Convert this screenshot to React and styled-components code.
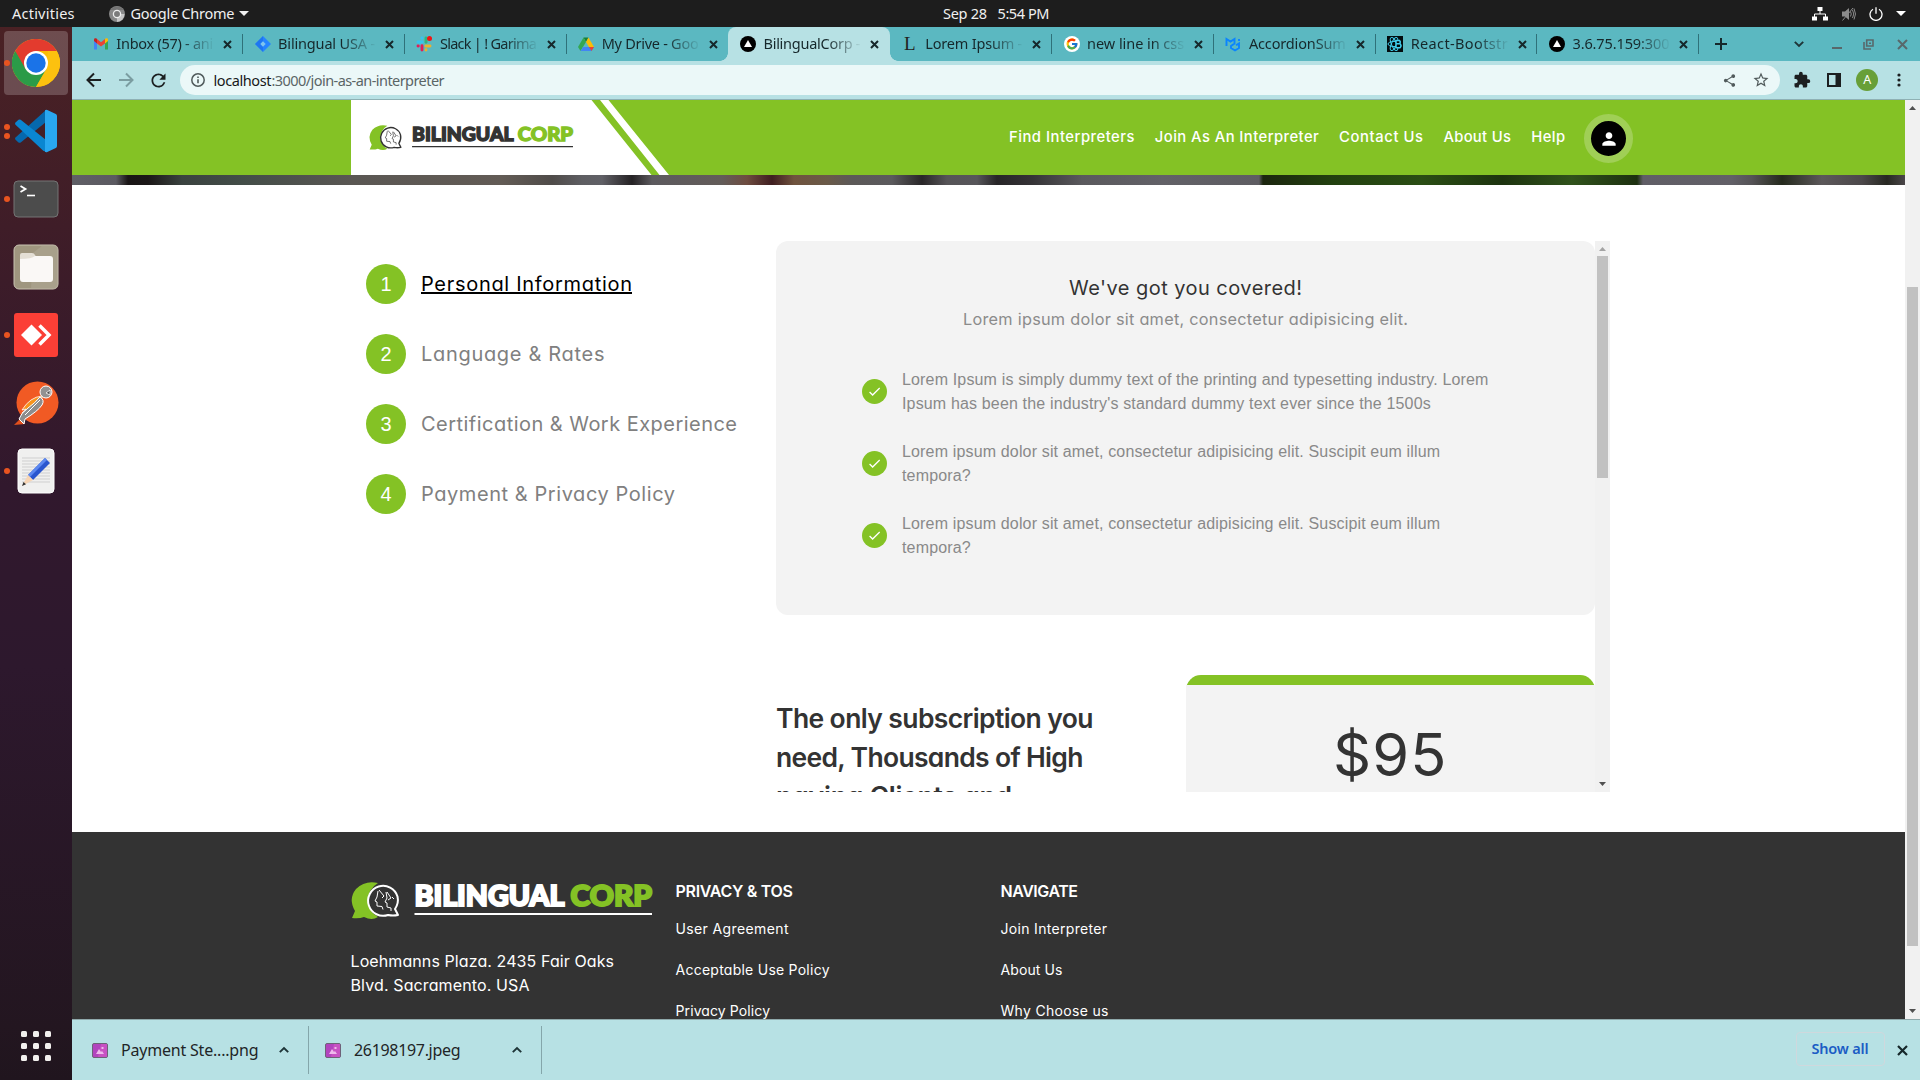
import React, { useLayoutEffect, useRef, useState } from "react";
import styled, { createGlobalStyle, css } from "styled-components";
import { FcGoogle } from "react-icons/fc";
import { MdExtension, MdShare, MdStarBorder, MdRefresh, MdPerson, MdCheck } from "react-icons/md";

const GREEN = "#84c225";
const UI = `"Noto Sans", "Open Sans", sans-serif`;
const BRAND = `Inter, "Open Sans", sans-serif`;

const Global = createGlobalStyle`
  * { box-sizing: border-box; }
  body { margin: 0; overflow: hidden; font-family: ${BRAND}; font-feature-settings: "cv11"; }
  svg { display: block; flex: none; }
  p, h1, h2, ul { margin: 0; padding: 0; font-weight: inherit; }
`;

/* Text whose tracking is tuned so that it spans a given width */
const FitBox = styled.span`
  display: block;
  white-space: pre;
  flex: none;
`;
function Fit({ w, children }) {
  const ref = useRef(null);
  const [ls, setLs] = useState(0);
  useLayoutEffect(() => {
    const el = ref.current;
    el.style.letterSpacing = "0px";
    const natural = el.getBoundingClientRect().width;
    setLs((w - natural) / Math.max(1, children.length - 1));
    el.style.letterSpacing = "";
  }, [w, children]);
  return (
    <FitBox style={{ width: w }}>
      <span key={ls} ref={ref} style={{ letterSpacing: ls }}>{children}</span>
    </FitBox>
  );
}

/* ---------- desktop shell ---------- */
const Screen = styled.div`
  width: 1920px;
  height: 1080px;
  display: flex;
  flex-direction: column;
  overflow: hidden;
  background: #fff;
`;
const TopBar = styled.header`
  height: 27px;
  flex: none;
  background: #1d1d1d;
  color: #f0f0f0;
  font: 14.5px/27px ${UI};
  display: grid;
  grid-template-columns: 943px 1fr auto;
  padding-right: 14px;
`;
const TopGroup = styled.div`
  display: flex;
  align-items: center;
  padding-left: ${(p) => p.$pad || 0}px;
  gap: ${(p) => p.$gap || 0}px;
`;
const ChromeMono = styled.div`
  margin: 0 6px 0 34px;
`;
const CaretGap = styled.div`
  margin-left: 4px;
`;
const Body = styled.div`
  flex: 1;
  min-height: 0;
  display: flex;
`;
const Dock = styled.nav`
  width: 72px;
  flex: none;
  padding: 4px 4px 15px;
  display: flex;
  flex-direction: column;
  gap: 4px;
  background: linear-gradient(180deg, #4a2124 0, #3f1d28 200px, #31182d 460px, #2d182d 640px, #231620 1000px, #20151e 100%);
`;
const Tile = styled.div`
  width: 64px;
  height: 64px;
  border-radius: 4px;
  display: flex;
  align-items: center;
  justify-content: center;
  position: relative;
  background: ${(p) => (p.$active ? "rgba(255,255,255,.2)" : "transparent")};
`;
const Marks = styled.div`
  position: absolute;
  left: 0;
  top: 0;
  height: 64px;
  display: flex;
  flex-direction: column;
  justify-content: center;
  gap: 3px;
`;
const Mark = styled.i`
  width: 6px;
  height: 6px;
  border-radius: 50%;
  background: #e95420;
`;
const AppGrid = styled.div`
  margin: auto 0 0 17px;
  display: grid;
  grid-template-columns: repeat(3, 6px);
  gap: 6px;
  padding-bottom: 4px;
`;
const AppDot = styled.i`
  height: 6px;
  border-radius: 1.5px;
  background: #f2f0ee;
`;

/* ---------- browser ---------- */
const Browser = styled.div`
  flex: 1;
  min-width: 0;
  display: flex;
  flex-direction: column;
`;
const TabStrip = styled.div`
  height: 34px;
  flex: none;
  background: #5bb8c1;
  display: flex;
  padding-left: 8.8px;
`;
const TabBox = styled.div`
  width: 161.8px;
  flex: none;
  height: 34px;
  position: relative;
  display: flex;
  align-items: center;
  padding-left: 12px;
  color: #16282b;
  font: 14.5px/32px ${UI};
  ${(p) =>
    p.$active
      ? css`
          background: #b7e1e4;
          border-radius: 8px 8px 0 0;
          &::before, &::after {
            content: "";
            position: absolute;
            bottom: 0;
            width: 8px;
            height: 8px;
            background: radial-gradient(circle at 0 0, transparent 7.5px, #b7e1e4 8px);
          }
          &::before { left: -8px; }
          &::after { right: -8px; transform: scaleX(-1); }
        `
      : ""}
`;
const TabTitle = styled.div`
  width: 97px;
  height: 34px;
  margin: 0 10px 0 7.5px;
  overflow: hidden;
  mask-image: linear-gradient(90deg, #000 66%, transparent 102%);
`;
const TabDivider = styled.i`
  position: absolute;
  right: -0.5px;
  top: 7px;
  width: 1px;
  height: 20px;
  background: #2f7179;
`;
const Favicon = styled.div`
  width: 16px;
  height: 16px;
  flex: none;
  display: flex;
  align-items: center;
  justify-content: center;
  font: 19px/16px "Liberation Serif", serif;
  color: #222;
`;
const WindowButtons = styled.div`
  flex: 1;
  display: flex;
  align-items: center;
  padding: 0 12.5px 0 15.5px;
`;
const Spacer = styled.div`
  flex: ${(p) => (p.$w ? `0 0 ${p.$w}px` : 1)};
`;
const Toolbar = styled.div`
  height: 39px;
  flex: none;
  background: #b7e1e4;
  border-bottom: 1px solid #8fb1b4;
  display: flex;
  align-items: center;
  padding: 0 16px 0 14px;
`;
const Omnibox = styled.div`
  width: 1600px;
  flex: none;
  height: 30px;
  margin: 0 13px 0 11.5px;
  border-radius: 15px;
  background: #ebf8f8;
  display: flex;
  align-items: center;
  padding: 0 10px 0 11px;
  font: 14.5px/29px ${UI};
  color: #5a6566;
`;
const Host = styled.b`
  font-weight: 400;
  color: #17191a;
  margin-left: 8.5px;
`;
const Profile = styled.div`
  width: 22px;
  height: 22px;
  border-radius: 50%;
  background: #689f38;
  color: #fff;
  text-align: center;
  font: 12.5px/22px ${UI};
`;
const Viewport = styled.div`
  flex: 1;
  min-height: 0;
  display: flex;
`;
const Page = styled.main`
  flex: 1;
  min-width: 0;
  height: 919px;
  overflow: hidden;
  display: flex;
  flex-direction: column;
  background: #fff;
`;
const Track = styled.div`
  width: 15px;
  flex: none;
  background: #f1f1f1;
  display: flex;
  flex-direction: column;
  align-items: center;
  justify-content: space-between;
  padding: 6px 0;
`;
const Thumb = styled.div`
  width: 11px;
  height: ${(p) => p.$h}px;
  margin-top: ${(p) => p.$gap}px;
  margin-bottom: auto;
  background: #c1c1c1;
`;

/* ---------- site ---------- */
const SiteHeader = styled.div`
  height: 75px;
  flex: none;
  background: ${GREEN};
  display: flex;
  padding-left: 279px;
`;
const Nav = styled.nav`
  display: flex;
  align-items: center;
  margin-left: 339px;
  color: #fff;
  font: 500 14.8px/72px ${BRAND};
  height: 73px;
  gap: 20.3px;
`;
const Account = styled.div`
  width: 49px;
  height: 49px;
  margin: 4px 0 0 -1px;
  border: 7px solid #a0cf56;
  border-radius: 50%;
  background: #000;
  color: #fff;
  display: flex;
  align-items: center;
  justify-content: center;
`;
const Banner = styled.div`
  height: 10px;
  flex: none;
  background: linear-gradient(90deg, #605f66 0, #5b5a61 44px, #191515 56px, #1b1717 76px, #3a423f 110px, #434d48 170px, #5a5753 280px, #625b55 430px, #4f4b49 480px, #5e5e62 510px, #606066 530px, #252224 560px, #5c5a5e 580px, #635c59 650px, #6e4c40 675px, #3f1e20 700px, #70533e 722px, #6a5a48 755px, #5c5958 780px, #5b5a5d 820px, #292628 850px, #565457 875px, #57565a 905px, #272527 925px, #353336 960px, #5a595d 1010px, #626167 1090px, #5e5d62 1187px, #1c260f 1191px, #22400f 1260px, #2a4d14 1350px, #1d330f 1430px, #30521b 1500px, #1d3010 1565px, #605e66 1571px, #626067 1660px, #555356 1680px, #252a1d 1710px, #5c585a 1750px, #4c484a 1790px, #272822 1815px, #4a4648 1833px);
`;
const Content = styled.section`
  height: 647px;
  flex: none;
  display: grid;
  grid-template-columns: 410px 834px;
  padding: 56px 0 40px 294px;
`;
const Steps = styled.ul`
  list-style: none;
  padding-top: 23px;
  display: flex;
  flex-direction: column;
  gap: 30px;
`;
const Step = styled.li`
  height: 40px;
  display: flex;
  align-items: center;
  gap: 15px;
  font-size: 20px;
  line-height: 40px;
  color: ${(p) => (p.$active ? "#000" : "#808080")};
`;
const StepNo = styled.div`
  width: 40px;
  height: 40px;
  border-radius: 50%;
  background: ${GREEN};
  color: #fff;
  text-align: center;
  font: 20px/40px "Liberation Sans", Arial, sans-serif;
`;
const StepLabel = styled.div`
  height: 30px;
  line-height: 30px;
  background: ${(p) => (p.$active ? "linear-gradient(#000, #000) 0 23px / 100% 2px no-repeat" : "none")};
`;
const ScrollPanel = styled.div`
  height: 551px;
  display: flex;
  overflow: hidden;
`;
const PanelBody = styled.div`
  width: 819px;
  height: 551px;
  overflow: hidden;
`;
const Covered = styled.div`
  height: 374px;
  border-radius: 12px;
  background: #f3f3f3;
  display: flex;
  flex-direction: column;
  align-items: center;
  padding-top: 32px;
`;
const CoveredTitle = styled.h2`
  font-size: 20px;
  line-height: 30px;
  color: #333;
`;
const CoveredSub = styled.p`
  font-size: 16.3px;
  line-height: 24px;
  margin: 4px 0 37px;
  color: #8b8b8b;
`;
const Perks = styled.ul`
  list-style: none;
  width: 647px;
  display: grid;
  gap: 24px;
`;
const Perk = styled.li`
  display: flex;
  align-items: center;
  gap: 15px;
  font: 16px/24px "Liberation Sans", Arial, sans-serif;
  letter-spacing: 0.155px;
  color: #898989;
  white-space: pre-line;
`;
const Tick = styled.div`
  width: 25px;
  height: 25px;
  margin-bottom: 2px;
  border-radius: 50%;
  background: ${GREEN};
  color: #fff;
  display: flex;
  align-items: center;
  justify-content: center;
`;
const Offer = styled.div`
  display: grid;
  grid-template-columns: 410px 409px;
  padding-top: 60px;
`;
const Pitch = styled.h2`
  padding: 24px 0 0;
  font-size: 26.5px;
  font-weight: 600;
  line-height: 39px;
  color: #333;
`;
const PriceCap = styled.div`
  height: 10px;
  overflow: hidden;
  &::before {
    content: "";
    display: block;
    height: 30px;
    border-radius: 15px;
    background: ${GREEN};
  }
`;
const Price = styled.div`
  height: 200px;
  background: #f3f3f3;
  color: #333;
  font-size: 59.5px;
  line-height: 91px;
  padding: 24px 0 0 147px;
`;
const Footer = styled.footer`
  height: 187px;
  flex: none;
  background: #333;
  color: #fff;
  display: grid;
  grid-template-columns: 324.5px 325px 1fr;
  padding: 46px 0 0 279px;
  overflow: hidden;
`;
const FootLogo = styled.div`
  padding-top: 4px;
`;
const Address = styled.p`
  padding-top: 28.5px;
  margin-left: -0.5px;
  font-size: 16px;
  line-height: 24px;
`;
const FootHead = styled.div`
  font-size: 16px;
  font-weight: 600;
  line-height: 24px;
  padding-top: 1px;
`;
const FootLink = styled.div`
  font-size: 14px;
  line-height: 21px;
  margin: ${(p) => (p.$first ? 15 : 20)}px 0 0;
`;

/* ---------- downloads ---------- */
const Downloads = styled.div`
  height: 61px;
  flex: none;
  border-top: 1px solid #8fa9ab;
  background: #b7e1e4;
  display: flex;
  align-items: center;
  padding: 0 12.5px 0 0;
`;
const DownloadItem = styled.div`
  width: ${(p) => p.$w}px;
  height: 48px;
  padding-left: ${(p) => p.$pad}px;
  border-right: 1px solid #84a6aa;
  display: flex;
  align-items: center;
  font: 16px/48px ${UI};
  color: #1f2527;
`;
const FileName = styled.div`
  width: 157px;
  margin-left: 13px;
`;
const ShowAll = styled.div`
  width: 89px;
  height: 34px;
  margin: 0 12px 2px auto;
  border: 1px solid #cfd8dd;
  border-radius: 4px;
  display: flex;
  justify-content: center;
  font: 600 14.5px/31px ${UI};
  color: #1b5cc4;
`;

/* ---------- icons ---------- */
const Svg = ({ s = 16, w, h, box, children, ...r }) => (
  <svg width={w || s} height={h || s} viewBox={box || `0 0 ${w || s} ${h || s}`} fill="none" {...r}>{children}</svg>
);
const Cross = ({ s = 9, c = "#16282b", t = 2 }) => (
  <Svg s={s}><path d={`M1 1 ${s - 1} ${s - 1}M${s - 1} 1 1 ${s - 1}`} stroke={c} strokeWidth={t} /></Svg>
);
const Caret = ({ up, c = "#505050", w = 7, h = 4 }) => (
  <Svg w={w} h={h}><path d={up ? `M0 ${h}L${w / 2} 0 ${w} ${h}z` : `M0 0H${w}L${w / 2} ${h}z`} fill={c} /></Svg>
);
const Chevron = ({ up }) => (
  <Svg w={12} h={8}><path d={up ? "M1.8 6.2 6 2l4.200 4.200" : "M1.800 1.800 6 6l4.200-4.200"} stroke="#1e3437" strokeWidth="1.9" /></Svg>
);
const Gmail = () => (
  <Svg box="0 0 16 16">
    <path d="M1 4.500v9h3V7z" fill="#4285f4" /><path d="M12 7v6.500h3v-9z" fill="#34a853" />
    <path d="M1 5V3.500C1 2.300 2.500 1.700 3.500 2.500L4 3v4.500L1 5z" fill="#c5221f" />
    <path d="M12 3l.5-.5C13.500 1.700 15 2.300 15 3.500V5l-3 2.500z" fill="#fbbc04" />
    <path d="M4 3l4 3.200L12 3v4.400L8 10.500 4 7.400z" fill="#ea4335" />
  </Svg>
);
const Jira = () => (
  <Svg box="0 0 16 16"><path d="M8 0l8 8-8 8-8-8z" fill="#2684ff" /><path d="M8 0v5L5.200 7.900 8 10.700V16L0 8z" fill="#1668e3" opacity=".5" /><path d="M8 5.300 10.700 8 8 10.700 5.300 8z" fill="#7fc4ee" /></Svg>
);
const Slack = () => (
  <Svg box="0 0 16 16" strokeWidth="2.900" strokeLinecap="round">
    <path d="M6 2v.3M2 6h4.200" stroke="#36c5f0" /><path d="M10 2v4.200" stroke="#2eb67d" />
    <path d="M14 10H9.800M10 14v-.3" stroke="#ecb22e" /><path d="M6 14V9.800M2 10h.3" stroke="#e01e5a" />
    <circle cx="13.500" cy="2.500" r="2.500" fill="#f21515" />
  </Svg>
);
const Drive = () => (
  <Svg box="0 0 16 16">
    <path d="M5.500 1.500h5L8 6z" fill="#188038" /><path d="M5.500 1.500 0 11l2.500 4L8 6z" fill="#34a853" />
    <path d="M10.500 1.500 16 11h-5L8 6z" fill="#fbbc04" /><path d="M5 11h11l-2.500 4h-11z" fill="#4285f4" /><path d="M11 11h5l-2.500 4z" fill="#ea4335" />
  </Svg>
);
const Vercel = () => (
  <Svg box="0 0 16 16"><circle cx="8" cy="8" r="8" fill="#000" /><path d="M8 4l4 7H4z" fill="#fff" /></Svg>
);
const Mui = () => (
  <Svg box="0 0 16 16" stroke="#0a84ff" strokeWidth="1.900"><path d="M1.500 10V3l4 2.600L9.500 3v4.500L6 10v2l4 2.500 4-2.500V7.500l-3 1.800M14 3v2" /></Svg>
);
const ReactBoot = () => (
  <Svg box="0 0 16 16"><path fill="#020b0e" d="M0 0h16v16H0z" />
    <g stroke="#41cfee" strokeWidth="1"><ellipse cx="7" cy="8" rx="6" ry="2.600" /><ellipse cx="7" cy="8" rx="2.500" ry="7" transform="rotate(-24 7 8)" /><ellipse cx="7" cy="8" rx="2.500" ry="7" transform="rotate(24 7 8)" /><path d="M9 4.500h3.500q1.500 1.600 0 3.300H9zM9 7.800h4q2 2 0 4H9z" strokeWidth="1.500" fill="#020b0e" /></g>
  </Svg>
);
const ChromeLogo = ({ s = 48 }) => (
  <Svg s={s} box="0 0 48 48">
    <circle cx="24" cy="24" r="24" fill="#fbbc05" />
    <path d="M24 24 3.200 12A24 24 0 0 0 24 48l10.400-18z" fill="#2b9b48" />
    <path d="M3.200 12A24 24 0 0 1 44.800 12H24L13.600 30z" fill="#e33b2e" />
    <path d="M44.800 12A24 24 0 0 1 24 48l10.400-18L36 12z" fill="#fcc10f" />
    <circle cx="24" cy="24" r="12" fill="#fff" /><circle cx="24" cy="24" r="9.700" fill="#1a73e8" />
  </Svg>
);
const MonoChrome = () => (
  <Svg s={16}><circle cx="8" cy="8" r="8" fill="#888" /><path d="M8 8h7.500A8 8 0 0 1 8 16z" fill="#c4c4c4" /><path d="M1.500 4A8 8 0 0 1 14.800 4z" fill="#747474" /><circle cx="8" cy="8" r="3.600" fill="#7b7b7b" stroke="#eee" strokeWidth="1.300" /></Svg>
);
const VSCode = () => (
  <Svg s={44} box="0 0 44 44">
    <path d="M32 1 1.500 28.500q-1 1 0 2.200l3 2.700q1 .8 2.200 0L32 13z" fill="#0668ad" />
    <path d="M1.500 13.500q-1 1.200 0 2.200L29 41.500l3 1.500V31L6.700 10.800q-1.200-.8-2.200 0z" fill="#0a86d1" />
    <path d="M31 1.200Q32 .3 33.300 1l8.500 4q1.200.7 1.200 2v30q0 1.400-1.200 2l-8.500 4q-1.300.6-2.300-.2z" fill="#29a7f0" />
  </Svg>
);
const Terminal = () => (
  <Svg w={46} h={38}><rect x="1" y="1" width="44" height="36" rx="4" fill="#4c4c4c" stroke="#747474" /><path d="M7.500 6l5 3-5 3" stroke="#fff" strokeWidth="1.800" /><path d="M14 15.500h8" stroke="#fff" strokeWidth="1.600" /></Svg>
);
const Files = () => (
  <Svg s={46}><rect x="1" y="1" width="44" height="44" rx="5" fill="#9f967f" stroke="#c9c3b2" /><path d="M20 9 30 1h11q4 0 4 4v36q0 4-4 4H18z" fill="#b1aa97" opacity=".5" /><path d="M7 18v-7q0-2 2-2h10q2 0 3 2l2 3v5z" fill="#e4dfd5" /><path d="M7 15q12 0 15-3h15q3 0 3 3v20q0 3-3 3H10q-3 0-3-3z" fill="#faf8f6" /></Svg>
);
const AnyDesk = () => (
  <Svg s={44}><rect width="44" height="44" rx="3" fill="#fb3f36" /><path d="M17.500 11.500 28 22 17.500 32.500 7 22z" fill="#fff" /><path d="M25.500 12.500 35 22l-9.500 9.500" stroke="#fff" strokeWidth="3.500" /></Svg>
);
const Postman = () => (
  <Svg w={46} h={46}>
    <circle cx="24.500" cy="22.500" r="21" fill="#f15a24" /><path d="M1 45 9 37l3 7z" fill="#e2501d" />
    <path d="M29 16Q17 17 9 30l4-1-4 4 16-9 4-6z" fill="#f7941d" stroke="#fff" strokeWidth=".8" />
    <path d="M27 17q5 3 2 8-4 6-17 14l-1 5-5-5q2-6 9-11 7-5 12-11z" fill="#8d8d8d" stroke="#fff" strokeWidth="1" />
    <path d="M12 35 27 20" stroke="#fff" strokeWidth="1" />
    <circle cx="33" cy="12" r="6" fill="#929292" stroke="#fff" strokeWidth="1" /><path d="M33 13l4-3v5z" fill="#4c4c4c" stroke="#fff" strokeWidth=".8" />
  </Svg>
);
const Editor = () => (
  <Svg w={38} h={46}>
    <rect x="1" y="1" width="36" height="44" rx="4" fill="#f0f0ef" stroke="#fff" />
    <path d="M5 10h28M5 13h28M5 16h28M5 19h28M5 22h28M5 25h28M5 28h28M5 31h28M5 34h28" stroke="#cfcfcf" />
    <path d="M11 27 28 10l5 5-17 17z" fill="#2a56cf" /><path d="M11 27 28 10l2 2-17 17z" fill="#5c88f0" />
    <path d="M11 27l5 5-11 6z" fill="#f7d5b5" /><path d="M5 38l1.500-4 2.500 2.300z" fill="#333" />
  </Svg>
);
const PicFile = () => (
  <Svg w={16} h={15}><rect x=".5" y=".5" width="15" height="14" rx="1.500" fill="#b244be" stroke="#6d6278" /><path d="M9 1h6v13H6z" fill="#d45bc6" opacity=".65" /><path d="M4 11l3-5 2 3 1-1 2 3z" fill="#efb9ec" /><path d="M9.500 4h2v2h-2z" fill="#efb9ec" /></Svg>
);

/* Speech-bubble mark and word mark */
function Logo({ w, dark }) {
  const ink = dark ? "#fff" : "#333";
  const paper = dark ? "#333" : "#fff";
  return (
    <Svg w={w} h={(w * 38) / 301} box="0 0 301 38" overflow="visible">
      <path d="M27 1Q14-2 5 7-3 17 4 29L1 36q7 1 12-1 8 4 14 0-9-5-10-16Q17 7 27 1z" fill={GREEN} />
      <path d="M44 27q4-6 2.500-12.500A15 15 0 1 0 37 33q5 1 10 0z" fill={paper} stroke={ink} strokeWidth="2" strokeLinejoin="round" />
      <path d="M27 9l-1 6-2 4 2 1v4l5 .5 1 3M28 8l5 6-2 2M35 10l1 6-2 4 2 1v4l4 1v3M36 10l4 6-3 2M41 15l2 2" stroke={ink} strokeWidth="1" />
      <g fontFamily="Lato, sans-serif" fontWeight="900" fontSize="27.500" strokeWidth="2" strokeLinejoin="miter">
        <text x="63.500" y="24" textLength="150" lengthAdjust="spacingAndGlyphs" fill={ink} stroke={ink}>BILINGUAL</text>
        <text x="219.500" y="24" textLength="81.500" lengthAdjust="spacingAndGlyphs" fill={GREEN} stroke={GREEN}>CORP</text>
      </g>
      <path d="M63.500 32H301" stroke={ink} strokeWidth="2" />
    </Svg>
  );
}
const HeaderMark = styled.div`
  width: 319px;
  height: 75px;
  display: grid;
  > * { grid-area: 1 / 1; }
`;
const HeaderLogo = styled.div`
  padding: 25px 0 0 18px;
`;

const TABS = [
  ["Inbox (57) - ani", <Gmail />],
  ["Bilingual USA -", <Jira />],
  ["Slack | ! Garima", <Slack />],
  ["My Drive - Goo", <Drive />],
  ["BilingualCorp -", <Vercel />],
  ["Lorem Ipsum -", "L"],
  ["new line in css", <Svg s={16}><circle cx="8" cy="8" r="8" fill="#fff" /><FcGoogle x="1.500" y="1.500" size={13} /></Svg>],
  ["AccordionSum", <Mui />],
  ["React-Bootstr", <ReactBoot />],
  ["3.6.75.159:300", <Vercel />],
];
const DOCK = [
  [<ChromeLogo />, 1],
  [<VSCode />, 2],
  [<Terminal />, 1],
  [<Files />, 0],
  [<AnyDesk />, 1],
  [<Postman />, 0],
  [<Editor />, 1],
];
const NAV = [["Find Interpreters", 125.5], ["Join As An Interpreter", 164], ["Contact Us", 84], ["About Us", 67.5], ["Help", 34]];
const STEPS = [["Personal Information", 211], ["Language & Rates", 183.5], ["Certification & Work Experience", 316], ["Payment & Privacy Policy", 254]];
const PERKS = [
  "Lorem Ipsum is simply dummy text of the printing and typesetting industry. Lorem\nIpsum has been the industry's standard dummy text ever since the 1500s",
  "Lorem ipsum dolor sit amet, consectetur adipisicing elit. Suscipit eum illum\ntempora?",
  "Lorem ipsum dolor sit amet, consectetur adipisicing elit. Suscipit eum illum\ntempora?",
];
const FOOT = [
  [["PRIVACY & TOS", 117.5], ["User Agreement", 113], ["Acceptable Use Policy", 154], ["Privacy Policy", 94.5]],
  [["NAVIGATE", 77.5], ["Join Interpreter", 106.5], ["About Us", 62], ["Why Choose us", 108]],
];

export default function App() {
  return (
    <Screen>
      <Global />
      <TopBar>
        <TopGroup $pad={12}>
          <Fit w={62.5}>Activities</Fit>
          <ChromeMono><MonoChrome /></ChromeMono>
          <Fit w={104}>Google Chrome</Fit>
          <CaretGap><Caret c="#f0f0f0" w={10} h={5} /></CaretGap>
        </TopGroup>
        <TopGroup $gap={10.5}>
          <Fit w={44}>Sep 28</Fit>
          <Fit w={52}>5:54 PM</Fit>
        </TopGroup>
        <TopGroup $gap={13}>
          <Svg w={16} h={14}><path d="M5.500 0h5v4h-5zM0 9.500h5v4H0zM11 9.500h5v4h-5z" fill="#fff" /><path d="M8 4v3M2.500 10V7h11v3" stroke="#fff" /></Svg>
          <Svg w={15} h={14}><path d="M1 4.500h3l4-3.500v12L4 9.500H1z" fill="#8c8c8c" /><path d="M9.500 4.500q1.500 2.500 0 5M11.500 3q2.500 4 0 8M13 1.500q3 5.500 0 11M1.500 13.500 12 1" stroke="#8c8c8c" /></Svg>
          <Svg w={14} h={14}><path d="M4 2.200a6 6 0 1 0 6 0M7 .3v6.500" stroke="#fff" strokeWidth="1.300" /></Svg>
          <Caret c="#fff" w={10} h={5} />
        </TopGroup>
      </TopBar>
      <Body>
        <Dock>
          {DOCK.map(([icon, n], i) => (
            <Tile key={i} $active={i === 0}>
              <Marks>{Array.from({ length: n }, (_, k) => <Mark key={k} />)}</Marks>
              {icon}
            </Tile>
          ))}
          <AppGrid>{Array.from({ length: 9 }, (_, i) => <AppDot key={i} />)}</AppGrid>
        </Dock>
        <Browser>
          <TabStrip>
            {TABS.map(([title, icon], i) => (
              <TabBox key={i} $active={i === 4}>
                <Favicon>{icon}</Favicon>
                <TabTitle><Fit w={97}>{title}</Fit></TabTitle>
                <Cross />
                {i !== 3 && i !== 4 && <TabDivider />}
              </TabBox>
            ))}
            <WindowButtons>
              <Svg s={14}><path d="M7 1v12M1 7h12" stroke="#16282b" strokeWidth="2" /></Svg>
              <Spacer />
              <Chevron />
              <Spacer $w={27} />
              <Svg w={10} h={10}><path d="M0 9h10" stroke="#58686b" strokeWidth="2" /></Svg>
              <Spacer $w={21} />
              <Svg s={11}><path d="M3.700 1h6.300v6H3.700zM1 3v7h7" stroke="#58686b" strokeWidth="1.600" /><path d="M6 3.500h2v1.500H6z" fill="#58686b" /></Svg>
              <Spacer $w={23} />
              <Cross s={11} c="#58686b" />
            </WindowButtons>
          </TabStrip>
          <Toolbar>
            <Svg s={16}><path d="M15 8H2M8 1.500 1.500 8 8 14.500" stroke="#1b1f20" strokeWidth="2" /></Svg>
            <Spacer $w={16} />
            <Svg s={16}><path d="M1 8h13M8 1.500 14.500 8 8 14.500" stroke="#7b9da1" strokeWidth="2" /></Svg>
            <Spacer $w={13.5} />
            <MdRefresh size={21} color="#1b1f20" />
            <Omnibox>
              <Svg s={14}><circle cx="7" cy="7" r="6.200" stroke="#505a5b" strokeWidth="1.500" /><path d="M7 6.300v4M7 3.500v1.500" stroke="#505a5b" strokeWidth="1.600" /></Svg>
              <Host><Fit w={58}>localhost</Fit></Host>
              <Fit w={173}>:3000/join-as-an-interpreter</Fit>
              <Spacer />
              <MdShare size={15} color="#505a5b" />
              <Spacer $w={15} />
              <MdStarBorder size={18} color="#505a5b" />
            </Omnibox>
            <MdExtension size={18} color="#1b1f20" />
            <Spacer />
            <Svg s={14}><path d="M1 1h12v12H1z" stroke="#1b1f20" strokeWidth="2" /><path d="M8.500 1H13v12H8.500z" fill="#1b1f20" /></Svg>
            <Spacer />
            <Profile>A</Profile>
            <Spacer />
            <Svg w={10} h={14}><circle cx="5" cy="2" r="1.600" fill="#1b1f20" /><circle cx="5" cy="7" r="1.600" fill="#1b1f20" /><circle cx="5" cy="12" r="1.600" fill="#1b1f20" /></Svg>
          </Toolbar>
          <Viewport>
            <Page>
              <SiteHeader>
                <HeaderMark>
                  <Svg w={319} h={75}><path d="M0 0h240.500l60 75H0zM249 0h8.500l60.500 75h-9.500z" fill="#fff" /></Svg>
                  <HeaderLogo><Logo w={204} /></HeaderLogo>
                </HeaderMark>
                <Nav>
                  {NAV.map(([t, w]) => <Fit key={t} w={w}>{t}</Fit>)}
                  <Account><MdPerson size={20} /></Account>
                </Nav>
              </SiteHeader>
              <Banner />
              <Content>
                <Steps>
                  {STEPS.map(([t, w], i) => (
                    <Step key={t} $active={i === 0}>
                      <StepNo>{i + 1}</StepNo>
                      <StepLabel $active={i === 0}><Fit w={w}>{t}</Fit></StepLabel>
                    </Step>
                  ))}
                </Steps>
                <ScrollPanel>
                  <PanelBody>
                    <Covered>
                      <CoveredTitle><Fit w={233}>We've got you covered!</Fit></CoveredTitle>
                      <CoveredSub><Fit w={445}>Lorem ipsum dolor sit amet, consectetur adipisicing elit.</Fit></CoveredSub>
                      <Perks>
                        {PERKS.map((t, i) => (
                          <Perk key={i}><Tick><MdCheck size={15} /></Tick>{t}</Perk>
                        ))}
                      </Perks>
                    </Covered>
                    <Offer>
                      <Pitch>
                        <Fit w={317.5}>The only subscription you</Fit>
                        <Fit w={307.5}>need, Thousands of High</Fit>
                        <Fit w={236}>paying Clients and</Fit>
                      </Pitch>
                      <div>
                        <PriceCap />
                        <Price><Fit w={113.5}>$95</Fit></Price>
                      </div>
                    </Offer>
                  </PanelBody>
                  <Track>
                    <Caret up c="#a3a3a3" />
                    <Thumb $h={222} $gap={5} />
                    <Caret />
                  </Track>
                </ScrollPanel>
              </Content>
              <Footer>
                <div>
                  <FootLogo><Logo w={301} dark /></FootLogo>
                  <Address>
                    <Fit w={263.5}>Loehmanns Plaza. 2435 Fair Oaks</Fit>
                    <Fit w={179}>Blvd. Sacramento. USA</Fit>
                  </Address>
                </div>
                {FOOT.map(([head, ...links]) => (
                  <div key={head[0]}>
                    <FootHead><Fit w={head[1]}>{head[0]}</Fit></FootHead>
                    {links.map(([t, w], i) => <FootLink key={t} $first={i === 0}><Fit w={w}>{t}</Fit></FootLink>)}
                  </div>
                ))}
              </Footer>
            </Page>
            <Track>
              <Caret up />
              <Thumb $h={659} $gap={177} />
              <Caret />
            </Track>
          </Viewport>
          <Downloads>
            <DownloadItem $w={237} $pad={20}>
              <PicFile /><FileName><Fit w={137.5}>Payment Ste....png</Fit></FileName><Chevron up />
            </DownloadItem>
            <DownloadItem $w={233} $pad={16}>
              <PicFile /><FileName><Fit w={106.5}>26198197.jpeg</Fit></FileName><Chevron up />
            </DownloadItem>
            <ShowAll><Fit w={57}>Show all</Fit></ShowAll>
            <Cross s={11} t={2.2} />
          </Downloads>
        </Browser>
      </Body>
    </Screen>
  );
}
